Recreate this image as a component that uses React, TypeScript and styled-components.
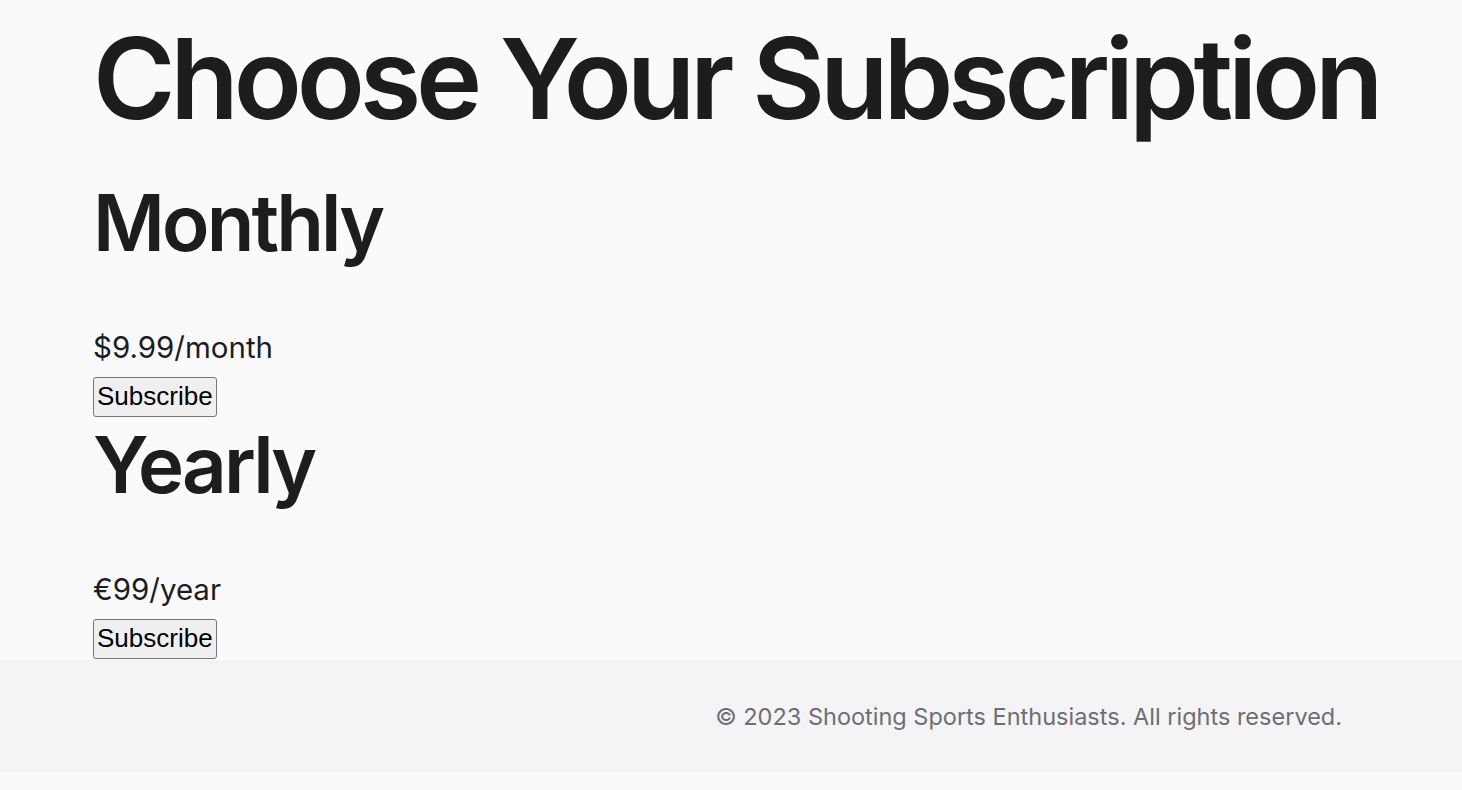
import styled, { createGlobalStyle } from "styled-components";

const GlobalStyle = createGlobalStyle`
  html, body {
    margin: 0;
    padding: 0;
    background-color: #fafafc;
  }
  body {
    font-family: Inter, "Noto Sans", sans-serif;
    color: #1d1d1f;
  }
`;

const Main = styled.main`
  padding: 10px 93px 0;
`;

const Title = styled.h1`
  margin: 0 0 29px;
  font-size: 112px;
  font-weight: 600;
  letter-spacing: -5.2px;
  line-height: normal;
  white-space: nowrap;
`;

const Plan = styled.section`
  display: flex;
  flex-direction: column;
  align-items: flex-start;
`;

const PlanName = styled.h2`
  margin: 0 0 60px;
  font-size: 78px;
  font-weight: 600;
  letter-spacing: -2.9px;
  line-height: normal;
`;

const Price = styled.p`
  margin: 0 0 12px;
  font-size: 29.5px;
  line-height: 35px;
`;

const Button = styled.button`
  font-family: "Liberation Sans", Arial, sans-serif;
  font-size: 26px;
  color: #000;
  background-color: #efefef;
  border: 1px solid #767676;
  border-radius: 3px;
  padding: 3px 3px 4px;
  line-height: normal;
  cursor: pointer;
`;

const Footer = styled.footer`
  margin-top: 1px;
  height: 112px;
  display: flex;
  align-items: center;
  justify-content: flex-end;
  padding: 0 120px;
  background-color: #f4f4f6;
  color: #6e6e73;
  font-size: 23.5px;
`;

const plans = [
  { name: "Monthly", price: "$9.99/month" },
  { name: "Yearly", price: "€99/year" },
];

export default function App() {
  return (
    <>
      <GlobalStyle />
      <Main>
        <Title>Choose Your Subscription</Title>
        {plans.map((plan) => (
          <Plan key={plan.name}>
            <PlanName>{plan.name}</PlanName>
            <Price>{plan.price}</Price>
            <Button>Subscribe</Button>
          </Plan>
        ))}
      </Main>
      <Footer>© 2023 Shooting Sports Enthusiasts. All rights reserved.</Footer>
    </>
  );
}
